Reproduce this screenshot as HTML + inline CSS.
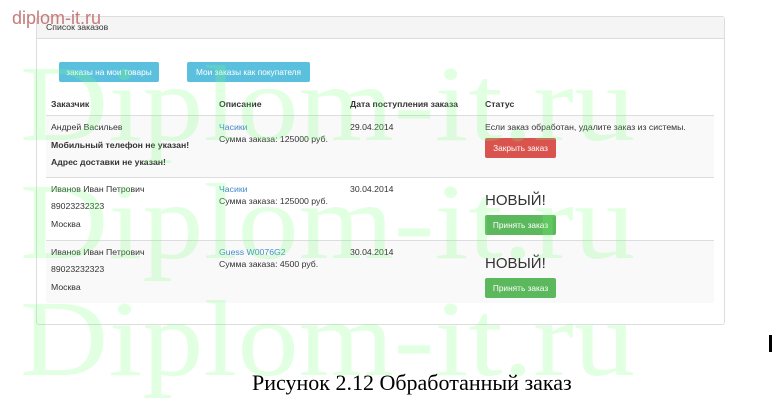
<!DOCTYPE html>
<html><head><meta charset="utf-8"><style>
body{margin:0;width:774px;height:405px;background:#fff;position:relative;overflow:hidden;font-family:"Liberation Sans",sans-serif;font-size:8.7px;color:#333}
.panel{position:absolute;left:36px;top:16px;width:687px;height:307px;border:1px solid #ddd;border-radius:3px;background:#fff}
.ph{height:21px;background:#f5f5f5;border-bottom:1px solid #ddd;line-height:21px;padding-left:9px;font-size:8.7px}
.btn{position:absolute;height:20px;line-height:20px;color:#fff;font-size:8.3px;text-align:center;border-radius:2px}
.info{background:#5bc0de;top:45px}
.abs{position:absolute}
.row{position:absolute;left:9px;width:668px;border-top:1px solid #ddd}
.g{background:#f9f9f9}
a{color:#428bca}
.red{background:#d9534f}.grn{background:#5cb85c}
.cap{position:absolute;top:370px;left:252px;font-family:"Liberation Serif",serif;font-size:22px;color:#000}
</style></head><body>
<div class="panel">
<div class="ph">Список заказов</div>
<div class="btn info" style="left:22px;width:100px">заказы на мои товары</div>
<div class="btn info" style="left:150px;width:123px">Мои заказы как покупателя</div>
<div class="abs" style="left:14px;top:82px;font-weight:bold">Заказчик</div>
<div class="abs" style="left:182px;top:82px;font-weight:bold">Описание</div>
<div class="abs" style="left:313px;top:82px;font-weight:bold">Дата поступления заказа</div>
<div class="abs" style="left:448px;top:82px;font-weight:bold">Статус</div>
<div class="row g" style="top:98px;height:62px">
<div class="abs" style="left:5px;top:6px">Андрей Васильев</div>
<div class="abs" style="left:5px;top:24px;font-weight:bold">Мобильный телефон не указан!</div>
<div class="abs" style="left:5px;top:41px;font-weight:bold">Адрес доставки не указан!</div>
<div class="abs" style="left:173px;top:6px"><a>Часики</a></div>
<div class="abs" style="left:173px;top:18px">Сумма заказа: 125000 руб.</div>
<div class="abs" style="left:304px;top:6px">29.04.2014</div>
<div class="abs" style="left:439px;top:6px">Если заказ обработан, удалите заказ из системы.</div>
<div class="btn red" style="left:439px;top:22px;width:71px">Закрыть заказ</div>
</div>
<div class="row" style="top:160px;height:62px">
<div class="abs" style="left:5px;top:6px">Иванов Иван Петрович</div>
<div class="abs" style="left:5px;top:23px">89023232323</div>
<div class="abs" style="left:5px;top:41px">Москва</div>
<div class="abs" style="left:173px;top:6px"><a>Часики</a></div>
<div class="abs" style="left:173px;top:18px">Сумма заказа: 125000 руб.</div>
<div class="abs" style="left:304px;top:6px">30.04.2014</div>
<div class="abs" style="left:439px;top:14px;font-size:15px">НОВЫЙ!</div>
<div class="btn grn" style="left:439px;top:37px;width:71px">Принять заказ</div>
</div>
<div class="row g" style="top:223px;height:62px">
<div class="abs" style="left:5px;top:6px">Иванов Иван Петрович</div>
<div class="abs" style="left:5px;top:23px">89023232323</div>
<div class="abs" style="left:5px;top:41px">Москва</div>
<div class="abs" style="left:173px;top:6px"><a>Guess W0076G2</a></div>
<div class="abs" style="left:173px;top:18px">Сумма заказа: 4500 руб.</div>
<div class="abs" style="left:304px;top:6px">30.04.2014</div>
<div class="abs" style="left:439px;top:14px;font-size:15px">НОВЫЙ!</div>
<div class="btn grn" style="left:439px;top:37px;width:71px">Принять заказ</div>
</div>
</div>
<div class="abs" style="left:12px;top:8px;color:#c77a7a;font-size:18px">diplom-it.ru</div>
<svg class="abs" style="left:0;top:0" width="774" height="405">
<g font-family="Liberation Serif,serif" font-size="108" fill="rgb(120,255,120)" fill-opacity="0.22">
<text x="20" y="140" textLength="615" lengthAdjust="spacingAndGlyphs">Diplom-it.ru</text>
<text x="20" y="258" textLength="615" lengthAdjust="spacingAndGlyphs">Diplom-it.ru</text>
<text x="20" y="375" textLength="615" lengthAdjust="spacingAndGlyphs">Diplom-it.ru</text>
</g>
<rect x="769" y="335" width="3" height="17" fill="#000"/>
</svg>
<div class="cap">Рисунок 2.12 Обработанный заказ</div>
</body></html>
